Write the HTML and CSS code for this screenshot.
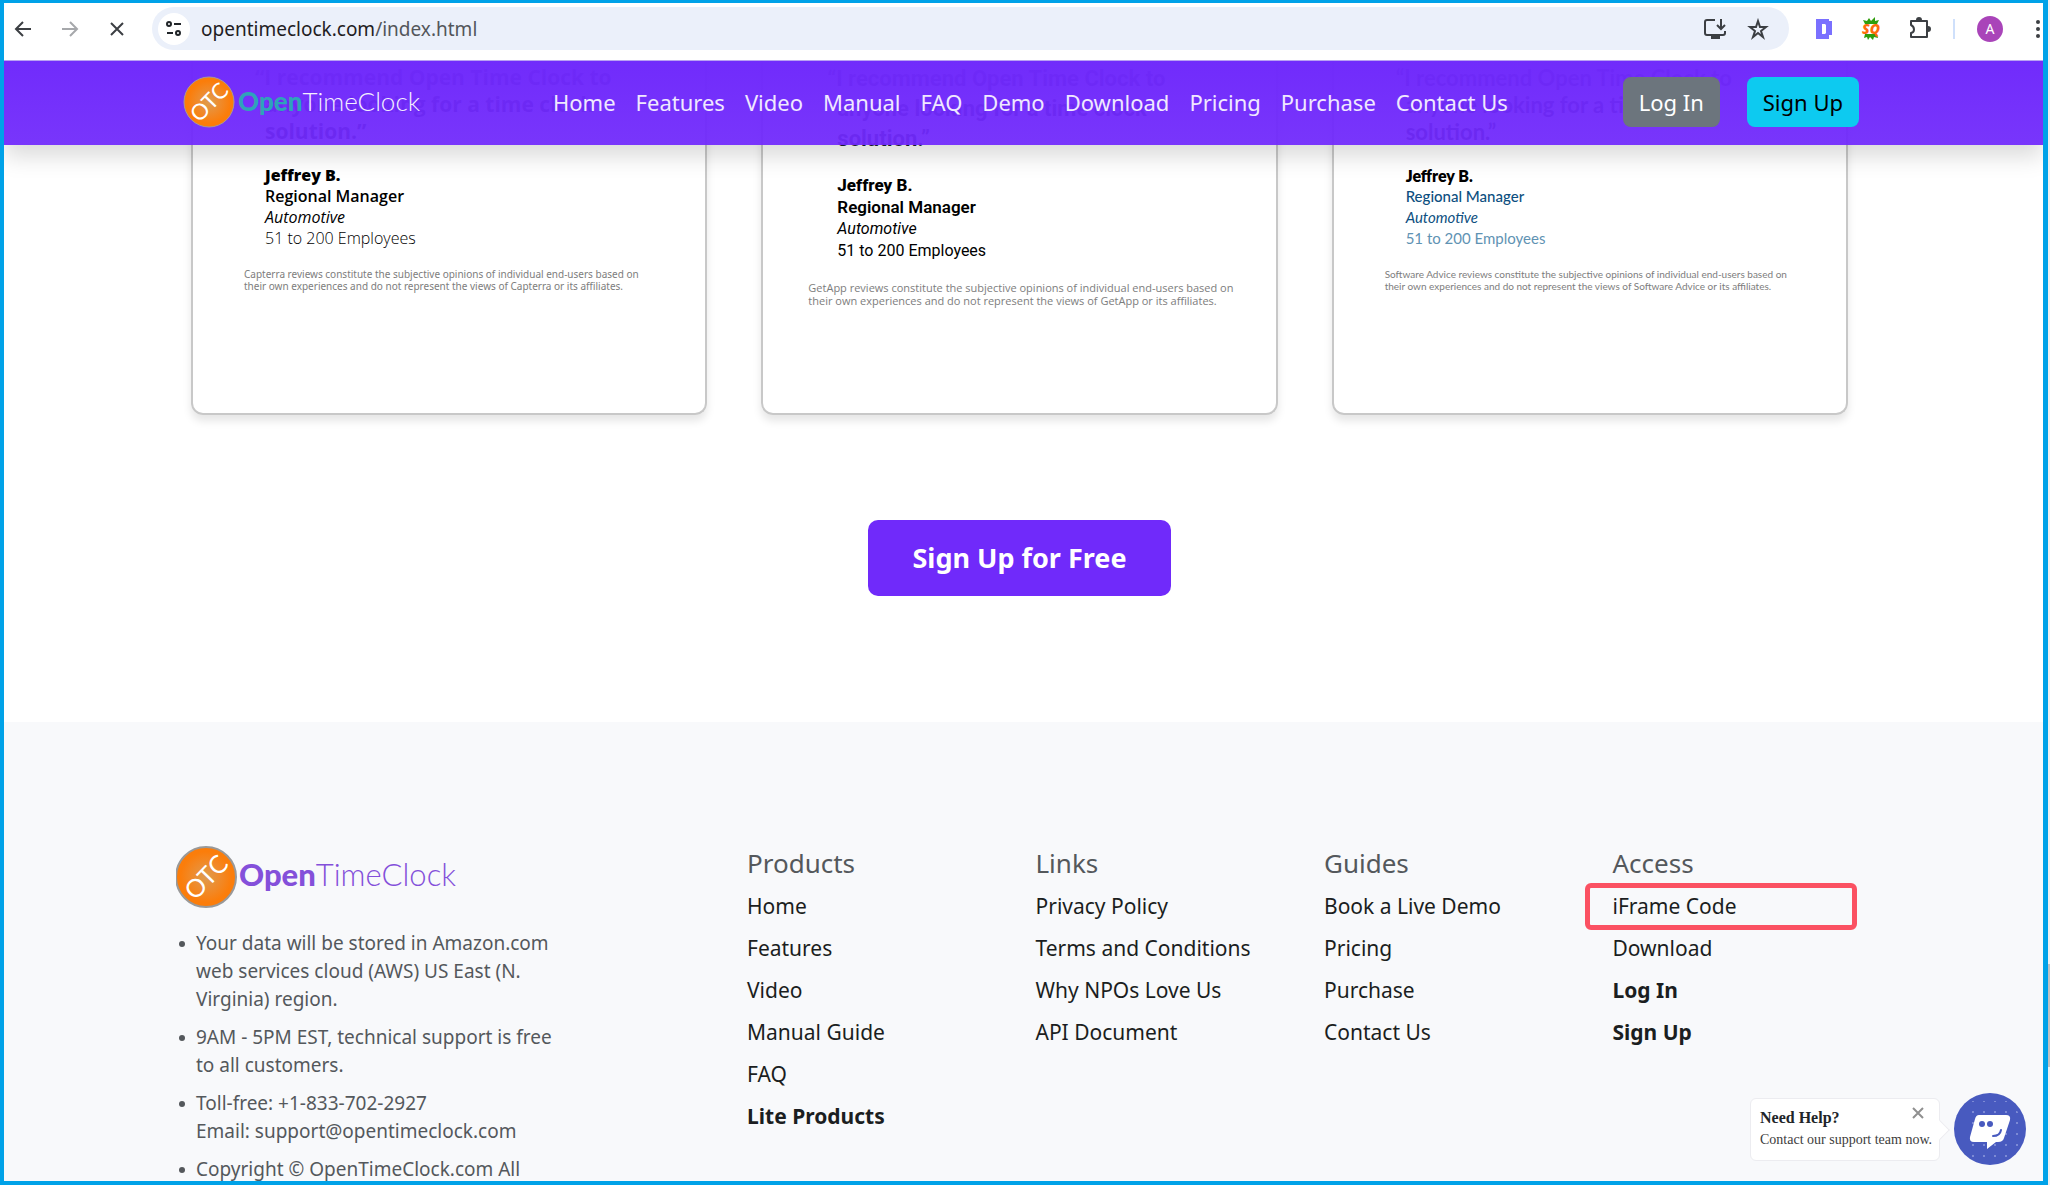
FILE: index.html
```html
<!DOCTYPE html>
<html lang="en">
<head>
<meta charset="utf-8">
<title>Open Time Clock</title>
<link rel="stylesheet" href="styles.css">
</head>
<body>
<div class="window">
  <div class="toolbar">
    <div class="toolbar-nav">
      <button class="tool" aria-label="Back"><svg width="20" height="20" viewBox="0 0 20 20" class="line"><path d="M18 10H3M10 3L3 10l7 7"/></svg></button>
      <button class="tool disabled" aria-label="Forward"><svg width="20" height="20" viewBox="0 0 20 20" class="line"><path d="M2 10h15M10 3l7 7-7 7"/></svg></button>
      <button class="tool" aria-label="Stop"><svg width="20" height="20" viewBox="0 0 20 20" class="line"><path d="M4 4l12 12M16 4L4 16"/></svg></button>
    </div>
    <div class="address">
      <button class="site-info" aria-label="Site information"><svg width="20" height="20" viewBox="0 0 20 20" class="line"><circle cx="5" cy="5" r="2"/><path d="M10 5h7M3 14h6"/><circle cx="14" cy="14" r="2"/></svg></button>
      <div class="url">opentimeclock.com<span>/index.html</span></div>
      <button class="tool" aria-label="Install app"><svg width="24" height="22" viewBox="0 0 24 22" class="line"><path d="M12 2H4a2 2 0 0 0-2 2v11a2 2 0 0 0 2 2h16a2 2 0 0 0 2-2v-2M18 1v9M14 7l4 4 4-4"/><path d="M9 17h7v3H9z" fill="currentColor"/></svg></button>
      <button class="tool" aria-label="Bookmark"><svg width="22" height="22" viewBox="0 0 22 22" class="line"><path d="M11 3l2 6h6l-5 4 2 6-5-4-5 4 2-6-5-4h6z"/></svg></button>
    </div>
    <div class="extensions">
      <button class="tool" aria-label="D extension"><svg width="18" height="22" viewBox="0 0 18 22"><path fill="#7a70ff" fill-rule="evenodd" d="M1 1h13v2h3v14h-3v4H1zM7 6v10h3l1-1V7l-1-1z"/></svg></button>
      <button class="tool" aria-label="SQ extension"><svg width="22" height="24" viewBox="0 0 22 24"><path fill="#2f9e0c" d="M3 3l4 1 2-3 2 3 4-4v4l4-1-2 4H5zM5 17h12l1 4-4-1-1 3-3-3-2 3-1-3-3 1z"/><text x="11" y="17" class="sq">SQ</text></svg></button>
      <button class="tool" aria-label="Extensions"><svg width="22" height="24" viewBox="0 0 22 24" class="line"><path d="M2 4h16v16H2v-4c4-1 4-6 0-8z" stroke-linejoin="round"/><path d="M8 3a2 2 0 0 1 4 0zM19 10a2 2 0 0 1 0 4z" fill="currentColor"/></svg></button>
      <span class="divider"></span>
      <button class="avatar" aria-label="Profile">A</button>
      <button class="tool menu" aria-label="Menu"><svg width="6" height="20" viewBox="0 0 6 20" fill="currentColor"><circle cx="3" cy="3" r="2"/><circle cx="3" cy="10" r="2"/><circle cx="3" cy="17" r="2"/></svg></button>
    </div>
  </div>

  <div class="page">
    <header class="site-header">
      <div class="container header-inner">
        <a href="#" class="logo" aria-label="OpenTimeClock">
          <svg width="240" height="54" viewBox="0 0 240 54">
            <defs><radialGradient id="orb"><stop offset="0" stop-color="#dd9c50"/><stop offset=".45" stop-color="#ef8b2c"/><stop offset=".85" stop-color="#fb7d0a"/></radialGradient></defs>
            <circle cx="26" cy="27" r="25" fill="url(#orb)" stroke="#a89a96"/>
            <text class="orb-text" x="26" y="35" font-size="22" transform="rotate(-46 26 27)">OTC</text>
            <text class="word" x="55" y="36" font-size="26"><tspan class="word-open light">Open</tspan><tspan fill="#f4efff">TimeClock</tspan></text>
          </svg>
        </a>
        <nav class="main-nav">
          <a href="#">Home</a><a href="#">Features</a><a href="#">Video</a><a href="#">Manual</a><a href="#">FAQ</a><a href="#">Demo</a><a href="#">Download</a><a href="#">Pricing</a><a href="#">Purchase</a><a href="#">Contact Us</a>
        </nav>
        <div class="account">
          <button class="btn btn-login">Log In</button>
          <button class="btn btn-signup">Sign Up</button>
        </div>
      </div>
    </header>

    <main>
      <section class="container reviews">
        <article class="review capterra">
          <blockquote>“I recommend Open Time Clock to anyone looking for a time clock solution.”</blockquote>
          <p class="author"><b>Jeffrey B.</b><strong>Regional Manager</strong><em>Automotive</em><span>51 to 200 Employees</span></p>
          <p class="note">Capterra reviews constitute the subjective opinions of individual end-users based on<br>their own experiences and do not represent the views of Capterra or its affiliates.</p>
        </article>
        <article class="review getapp">
          <blockquote>“I recommend Open Time Clock to anyone looking for a time clock solution.”</blockquote>
          <p class="author"><b>Jeffrey B.</b><strong>Regional Manager</strong><em>Automotive</em><span>51 to 200 Employees</span></p>
          <p class="note">GetApp reviews constitute the subjective opinions of individual end-users based on<br>their own experiences and do not represent the views of GetApp or its affiliates.</p>
        </article>
        <article class="review advice">
          <blockquote>“I recommend Open Time Clock to anyone looking for a time clock solution.”</blockquote>
          <p class="author"><b>Jeffrey B.</b><strong>Regional Manager</strong><em>Automotive</em><span>51 to 200 Employees</span></p>
          <p class="note">Software Advice reviews constitute the subjective opinions of individual end-users based on<br>their own experiences and do not represent the views of Software Advice or its affiliates.</p>
        </article>
      </section>
      <div class="cta"><button class="cta-button">Sign Up for Free</button></div>
    </main>

    <footer class="site-footer">
      <div class="container footer-grid">
        <div class="about">
          <svg width="290" height="64" viewBox="0 0 290 64" role="img" aria-label="OpenTimeClock">
            <circle cx="30" cy="32" r="30" fill="url(#orb)" stroke="#999" stroke-width="2"/>
            <text class="orb-text" x="30" y="41" font-size="25" transform="rotate(-46 30 32)">OTC</text>
            <text class="word" x="63" y="41" font-size="31" fill="#8450da"><tspan class="word-open">Open</tspan><tspan>TimeClock</tspan></text>
          </svg>
          <ul>
            <li>Your data will be stored in Amazon.com web services cloud (AWS) US East (N. Virginia) region.</li>
            <li>9AM - 5PM EST, technical support is free to all customers.</li>
            <li>Toll-free: +1-833-702-2927<br>Email: support@opentimeclock.com</li>
            <li>Copyright © OpenTimeClock.com All</li>
          </ul>
        </div>
        <nav class="links"><h2>Products</h2><a href="#">Home</a><a href="#">Features</a><a href="#">Video</a><a href="#">Manual Guide</a><a href="#">FAQ</a><a href="#" class="bold">Lite Products</a></nav>
        <nav class="links"><h2>Links</h2><a href="#">Privacy Policy</a><a href="#">Terms and Conditions</a><a href="#">Why NPOs Love Us</a><a href="#">API Document</a></nav>
        <nav class="links"><h2>Guides</h2><a href="#">Book a Live Demo</a><a href="#">Pricing</a><a href="#">Purchase</a><a href="#">Contact Us</a></nav>
        <nav class="links"><h2>Access</h2><a href="#" class="marked">iFrame Code</a><a href="#">Download</a><a href="#" class="bold">Log In</a><a href="#" class="bold">Sign Up</a></nav>
      </div>
    </footer>

    <aside class="help">
      <div class="help-box">
        <strong>Need Help?</strong>
        <button class="help-close" aria-label="Close"><svg width="12" height="12" viewBox="0 0 12 12" class="line"><path d="M1 1l10 10M11 1L1 11"/></svg></button>
        <p>Contact our support team now.</p>
      </div>
      <button class="chat" aria-label="Open chat">
        <svg width="72" height="72" viewBox="0 0 72 72">
          <defs><pattern id="dots" width="11" height="11" patternUnits="userSpaceOnUse" x="3" y="3"><circle cx="5" cy="5" r="1" fill="#8e9add"/></pattern></defs>
          <circle cx="36" cy="36" r="36" fill="#485abf"/>
          <path d="M17 8h36l12 12v33L53 66H17z" fill="url(#dots)"/>
          <path fill="#fff" d="M25 22h27q5 0 4 5l-6 18q-1 4-6 4h-2l-9 7v-7H20q-5 0-4-5l5-18q1-4 4-4z"/>
          <circle cx="28" cy="31" r="3" fill="#485abf"/><circle cx="36" cy="31" r="3" fill="#485abf"/>
          <path d="M39 43q7 0 8-6" fill="none" stroke="#485abf" stroke-width="2" stroke-linecap="round"/>
        </svg>
      </button>
    </aside>
  </div>
</div>
<div class="outer-scroll"><div class="outer-thumb"></div></div>
</body>
</html>
```
FILE: styles.css
```css
*, *::before, *::after { box-sizing: border-box; }
body {
  margin: 0;
  height: 100vh;
  display: flex;
  overflow: hidden;
  background: #fff;
  font-family: "Noto Sans", "Open Sans", sans-serif;
  color: #212529;
}
button { font: inherit; border: 0; padding: 0; background: none; color: inherit; cursor: pointer; }
a { color: inherit; text-decoration: none; }
h2, p, ul, blockquote { margin: 0; padding: 0; }
svg { display: block; }
.line { fill: none; stroke: currentColor; stroke-width: 2; }

.window {
  flex: 1;
  min-width: 0;
  display: flex;
  flex-direction: column;
  border: 4px solid #00a2e8;
  border-top-width: 3px;
  border-right-width: 5px;
}
.outer-scroll { width: 2px; background: #f1f1f1; display: flex; flex-direction: column; justify-content: flex-end; padding-bottom: 118px; }
.outer-thumb { height: 103px; background: #c1c1c1; }

.toolbar { display: flex; align-items: center; padding: 4px 2px 10px 9px; border-bottom: 1px solid #b9a2f2; }
.toolbar-nav { display: flex; gap: 27px; width: 139px; }
.tool { color: #3c3f43; }
.disabled { color: #a6a8ab; }
.address { flex: 1; display: flex; align-items: center; gap: 20px; height: 43px; padding: 0 20px 0 6px; border-radius: 22px; background: #ebf0fa; }
.site-info { width: 32px; height: 32px; border-radius: 50%; background: #fff; display: grid; place-items: center; }
.url { flex: 1; margin-left: -9px; font-size: 19px; line-height: 26px; color: #1f2023; }
.url span { color: #53565a; }
.extensions { display: flex; align-items: center; gap: 27px; padding-left: 26px; }
.sq { font: italic 800 14px "Open Sans", sans-serif; fill: #ff6d0a; text-anchor: middle; }
.divider { width: 2px; height: 20px; margin-left: -5px; background: #cfe0fb; }
.avatar { width: 26px; height: 26px; margin-left: -5px; border-radius: 50%; background: #a944b9; color: #fff; font-size: 14px; line-height: 26px; }
.menu { margin-left: 5px; }

.page { position: relative; flex: 1; min-height: 0; overflow: hidden; display: flex; flex-direction: column; }
.container { max-width: 1731px; margin: 0 auto; }
.site-header {
  position: absolute;
  top: 0; left: 0; right: 0;
  z-index: 2;
  padding-right: 8px;
  background: linear-gradient(rgba(111, 41, 251, .99), rgba(112, 41, 251, .94));
  box-shadow: 0 11px 22px rgba(0, 0, 0, .15);
}
.header-inner { display: flex; align-items: center; height: 84px; padding: 0 26px 3px 29px; }
.logo { margin-right: 130px; }
.orb-text { font-family: Lato, sans-serif; fill: #fff; text-anchor: middle; }
.word { font-family: Lato, sans-serif; font-weight: 300; }
.word-open { font-weight: 900; }
.light { fill: #2fa3b9; }
.main-nav { display: flex; gap: 20px; font-size: 22px; line-height: 32px; color: #f0e8ff; white-space: nowrap; }
.account { display: flex; gap: 27px; margin-left: auto; }
.btn { padding: 0 16px; border-radius: 8px; font-size: 22px; line-height: 50px; white-space: nowrap; }
.btn-login { background: #6c757d; color: #fff; }
.btn-signup { background: #0dcaf0; color: #000; }

main { padding-right: 8px; }
.reviews { display: grid; grid-template-columns: repeat(3, minmax(0, 1fr)); gap: 54px; padding: 0 37px; }
.review {
  min-height: 354px;
  border: 2px solid #c8c8c8;
  border-top: 0;
  border-radius: 0 0 12px 12px;
  box-shadow: 0 6px 8px rgba(0, 0, 0, .1);
  padding: 3px 30px 0 51px;
  color: #000;
}
.review blockquote { padding: 0 20px 0 21px; text-indent: -10px; font-size: 21px; font-weight: 700; line-height: 27px; color: #1d1d33; }
.author { display: flex; flex-direction: column; padding: 20px 0 19px 21px; font-size: 16px; line-height: 21px; }
.author b { font-weight: 800; }
.author strong { font-weight: 600; }
.note { font-size: 10px; line-height: 12px; color: #7d7d7d; white-space: nowrap; }
.capterra { font-family: "Open Sans", sans-serif; }
.capterra span { font-weight: 300; }
.capterra .note { font-family: "Noto Sans", sans-serif; }
.getapp { font-family: Roboto, sans-serif; padding-left: 45px; }
.getapp blockquote { line-height: 30px; padding-left: 29px; font-size: 22px; }
.getapp .author { line-height: 22px; padding-left: 29px; }
.getapp b, .getapp strong { font-size: 17px; }
.getapp .note { font-family: "Open Sans", sans-serif; font-size: 11px; line-height: 13px; }
.advice { font-family: Lato, sans-serif; }
.advice blockquote { font-size: 22px; }
.advice .author { font-size: 15px; color: #0d4f80; }
.advice .author b { font-size: 16px; color: #000; }
.advice .author strong { font-weight: 500; }
.advice .author span { color: #5f93b3; }

.cta { display: flex; justify-content: center; padding: 105px 0 126px; }
.cta-button { padding: 0 44px; border-radius: 10px; background: #702afa; color: #fff; font-size: 27px; font-weight: 700; line-height: 76px; }

.site-footer { flex: 1; padding: 123px 8px 0 0; background: #f8f9fb; color: #54585c; }
.footer-grid { display: grid; grid-template-columns: 2fr 1fr 1fr 1fr 1fr; }
.about { padding: 0 165px 0 22px; }
.about ul { list-style: none; display: flex; flex-direction: column; gap: 10px; padding: 20px 0 0 20px; font-size: 19px; line-height: 28px; }
.about li { position: relative; }
.about li::before { content: ""; position: absolute; left: -17px; top: 12px; width: 6px; height: 6px; border-radius: 50%; background: #54585c; }
.links { display: flex; flex-direction: column; padding-left: 16px; font-size: 21px; line-height: 42px; color: #1b1e21; white-space: nowrap; }
.links h2 { margin-bottom: 4px; font-size: 26px; font-weight: 400; line-height: 36px; color: #54585c; }
.bold { font-weight: 700; }
.marked { position: relative; }
.marked::after { content: ""; position: absolute; left: -28px; top: -2px; width: 272px; height: 47px; border: 5px solid #fb5162; border-radius: 6px; }

.help { position: absolute; right: 17px; bottom: 16px; z-index: 3; display: flex; align-items: center; gap: 14px; font-family: "Liberation Serif", serif; }
.help-box { position: relative; display: grid; grid-template-columns: 1fr auto; width: 190px; padding: 8px 9px 10px; border: 1px solid #ececf0; border-radius: 6px; background: #fff; white-space: nowrap; }
.help-box::after { content: ""; position: absolute; right: -8px; top: 24px; width: 14px; height: 14px; background: #fff; border: 1px solid #ececf0; border-left: 0; border-bottom: 0; transform: rotate(45deg); }
.help-box strong { font-size: 16px; line-height: 22px; }
.help-box p { grid-column: 1 / 3; font-size: 14px; line-height: 21px; color: #3d3d3d; }
.help-close { align-self: start; color: #909090; padding-right: 6px; }
.chat { border-radius: 50%; }
```
